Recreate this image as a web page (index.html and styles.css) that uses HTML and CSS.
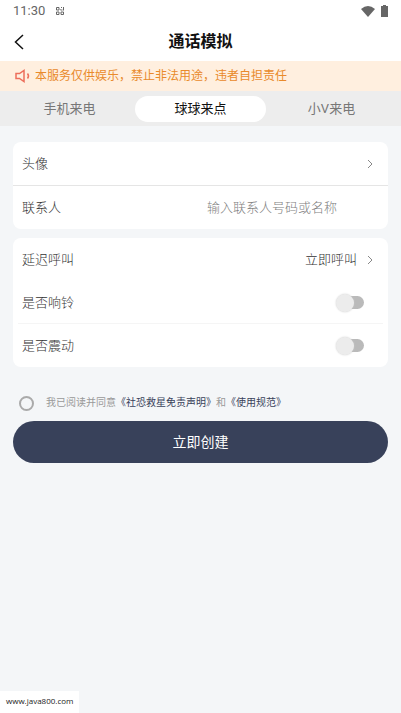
FILE: index.html
```html
<!DOCTYPE html>
<html lang="zh-CN">
<head>
<meta charset="utf-8">
<meta name="viewport" content="width=device-width, initial-scale=1">
<title>通话模拟</title>
<link rel="stylesheet" href="styles.css">
</head>
<body>
<div class="status">
  <span class="time">11:30</span>
  <svg class="status-app" viewBox="0 0 8 8" aria-hidden="true"><path d="M.5.5h2.500v2.500h-2.500zM5 .5h1M7.500 0v3.500M4.500 2.500v.5h2M.5 5h2.500v2.500h-2.500zM5 5h2.500v2.500h-2.500z"/></svg>
  <svg class="wifi" viewBox="0 0 14 11" aria-hidden="true"><path d="M0 3Q7-3 14 3L7 11z"/></svg>
  <svg class="battery" viewBox="0 0 7 12" aria-hidden="true"><path d="M2 0h3v1h2v11H0V1h2z"/></svg>
</div>
<header class="header">
  <button class="back" type="button" aria-label="返回"><svg viewBox="0 0 10 16" aria-hidden="true"><path d="M9 1 1.500 8 9 15"/></svg></button>
  <h1 class="title">通话模拟</h1>
</header>
<div class="notice">
  <svg class="speaker" viewBox="0 0 16 14" aria-hidden="true"><path d="M1 4.500h3.500L9 1.500v11L4.500 9.500H1z"/><path d="M12.500 4.500q2 2.500 0 5"/></svg>
  <span>本服务仅供娱乐，禁止非法用途，违者自担责任</span>
</div>
<nav class="tabs">
  <button class="tab" type="button">手机来电</button>
  <button class="tab active" type="button">球球来点</button>
  <button class="tab" type="button">小V来电</button>
</nav>
<main class="content">
  <section class="card">
    <button class="row line-full" type="button"><span>头像</span><svg class="chevron" viewBox="0 0 6 10" aria-hidden="true"><path d="M1 1l4 4-4 4"/></svg></button>
    <div class="row"><label for="contact">联系人</label><input class="contact" id="contact" type="text" placeholder="输入联系人号码或名称"></div>
  </section>
  <section class="card">
    <button class="row" type="button"><span>延迟呼叫</span><span class="value">立即呼叫</span><svg class="chevron" viewBox="0 0 6 10" aria-hidden="true"><path d="M1 1l4 4-4 4"/></svg></button>
    <div class="row line-inset"><label for="ring">是否响铃</label><input class="switch" id="ring" type="checkbox"></div>
    <div class="row"><label for="shake">是否震动</label><input class="switch" id="shake" type="checkbox"></div>
  </section>
  <div class="agree">
    <input class="agree-radio" id="agree" type="radio">
    <div><label for="agree">我已阅读并同意</label><a href="#disclaimer">《社恐救星免责声明》</a>和<a href="#rules">《使用规范》</a></div>
  </div>
  <button class="submit" type="button">立即创建</button>
</main>
<div class="watermark">www.java800.com</div>
</body>
</html>
```

FILE: styles.css
```css
* { box-sizing: border-box; }

body {
  margin: 0;
  min-height: 100vh;
  background: #f4f6f8;
  color: #333;
  font-family: Roboto, "Noto Sans CJK SC", sans-serif;
  font-size: 13px;
  line-height: 20px;
}

button, input { font: inherit; color: inherit; }
button { border: 0; padding: 0; background: none; cursor: pointer; }
svg { display: block; flex: none; fill: none; }

.status {
  display: flex;
  align-items: center;
  height: 22px;
  padding: 0 13px;
  background: #fff;
  color: #666;
}
.status-app { width: 8px; height: 8px; margin-left: 11px; stroke: #666; }
.wifi { width: 14px; height: 11px; margin-left: auto; fill: #666; }
.battery { width: 7px; height: 12px; margin-left: 6px; fill: #666; }

.header {
  display: grid;
  grid-template-columns: 40px 1fr 40px;
  align-items: center;
  height: 39px;
  background: #fff;
  color: #111;
}
.back { display: flex; align-items: center; height: 39px; padding-left: 14px; }
.back svg { width: 10px; height: 16px; stroke: #111; stroke-width: 1.5; }
.title { margin: 0; font-size: 16px; font-weight: 700; text-align: center; }

.notice {
  display: flex;
  align-items: center;
  gap: 4px;
  height: 30px;
  padding: 0 15px;
  background: #ffefdf;
  color: #e98a2b;
  font-size: 12px;
  white-space: nowrap;
}
.speaker { width: 16px; height: 14px; stroke: #ed6f5c; stroke-width: 1.5; }

.tabs {
  display: grid;
  grid-template-columns: repeat(3, 1fr);
  align-items: center;
  height: 35px;
  padding: 0 4px;
  background: #ededed;
}
.tab { height: 26px; border-radius: 13px; color: #777; }
.tab.active { background: #fff; color: #111; }

.content { padding: 16px 13px; }

.card { margin-bottom: 9px; border-radius: 8px; background: #fff; overflow: hidden; }
.row {
  position: relative;
  display: flex;
  align-items: center;
  justify-content: space-between;
  width: 100%;
  height: 43px;
  padding: 0 15px 0 9px;
  font-weight: 300;
}
.line-full { height: 44px; border-bottom: 1px solid #e5e5e5; }
.line-inset::after {
  content: "";
  position: absolute;
  right: 5px;
  bottom: 0;
  left: 5px;
  border-bottom: 1px solid #f5f5f5;
}
.chevron { width: 6px; height: 10px; stroke: #888; }
.value { margin-left: auto; margin-right: 10px; }
.contact {
  width: 166px;
  padding: 0;
  border: 0;
  outline: 0;
  background: none;
}
.contact::placeholder { color: #808080; opacity: 1; }

.switch {
  appearance: none;
  display: flex;
  align-items: center;
  width: 26px;
  height: 13px;
  margin: 0 9px 0 0;
  border-radius: 7px;
  background: #bababa;
}
.switch::before {
  content: "";
  flex: none;
  width: 18px;
  height: 18px;
  margin-left: -2px;
  border-radius: 50%;
  background: #ececec;
  box-shadow: 0 0 2px #ccc;
}
.switch:checked { justify-content: flex-end; background: #8790a8; }

.agree {
  display: flex;
  align-items: center;
  gap: 12px;
  margin-top: 26px;
  padding: 0 6px;
  color: #999;
  font-size: 10px;
}
.agree a { color: #38415a; text-decoration: none; }
.agree-radio {
  appearance: none;
  flex: none;
  width: 15px;
  height: 15px;
  margin: 0;
  border: 2px solid #aaa;
  border-radius: 50%;
}
.agree-radio:checked { background: #38415a; }

.submit {
  width: 100%;
  height: 42px;
  margin-top: 8px;
  border-radius: 21px;
  background: #38415a;
  color: #fff;
  font-size: 14px;
}

.watermark {
  position: fixed;
  bottom: 0;
  left: 0;
  padding: 0 6px 2px;
  background: #fff;
  color: #222;
  font-family: "Open Sans", sans-serif;
  font-size: 8px;
}
```
